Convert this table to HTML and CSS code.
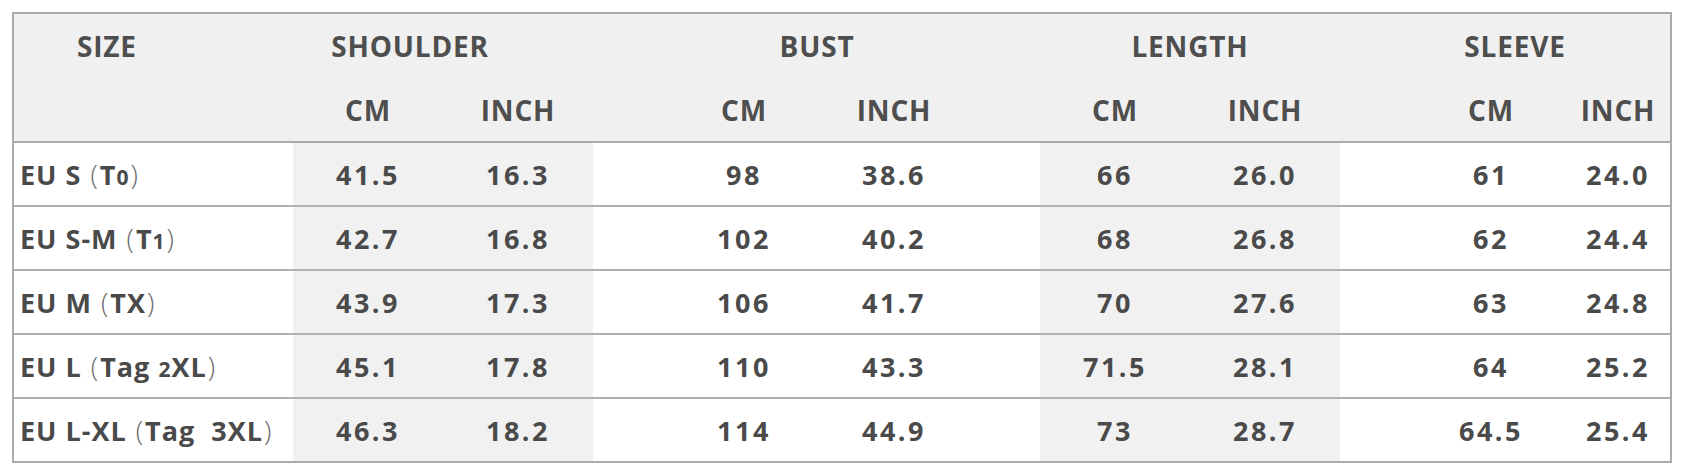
FILE: index.html
```html
<!DOCTYPE html>
<html>
<head>
<meta charset="utf-8">
<link rel="stylesheet" href="styles.css">
</head>
<body>
<div class="chart">
  <div class="head">
    <div class="row r1">
      <div class="cell size">SIZE</div>
      <div class="cell grp shoulder">SHOULDER</div>
      <div class="cell"></div>
      <div class="cell grp bust">BUST</div>
      <div class="cell"></div>
      <div class="cell grp length">LENGTH</div>
      <div class="cell"></div>
      <div class="cell grp sleeve">SLEEVE</div>
    </div>
    <div class="row r2">
      <div class="cell"></div>
      <div class="cell">CM</div><div class="cell">INCH</div>
      <div class="cell"></div>
      <div class="cell">CM</div><div class="cell">INCH</div>
      <div class="cell"></div>
      <div class="cell">CM</div><div class="cell">INCH</div>
      <div class="cell"></div>
      <div class="cell">CM</div><div class="cell">INCH</div>
    </div>
  </div>

  <div class="row data">
    <div class="cell label"><span>EU S <span class="par">(</span>T<span class="os">0</span><span class="par">)</span></span></div>
    <div class="cell sh">41.5</div><div class="cell sh">16.3</div><div class="cell"></div>
    <div class="cell">98</div><div class="cell">38.6</div><div class="cell"></div>
    <div class="cell sh">66</div><div class="cell sh">26.0</div><div class="cell"></div>
    <div class="cell">61</div><div class="cell">24.0</div>
  </div>
  <div class="row data">
    <div class="cell label"><span>EU S-M <span class="par">(</span>T<span class="os">1</span><span class="par">)</span></span></div>
    <div class="cell sh">42.7</div><div class="cell sh">16.8</div><div class="cell"></div>
    <div class="cell">102</div><div class="cell">40.2</div><div class="cell"></div>
    <div class="cell sh">68</div><div class="cell sh">26.8</div><div class="cell"></div>
    <div class="cell">62</div><div class="cell">24.4</div>
  </div>
  <div class="row data">
    <div class="cell label"><span>EU M <span class="par">(</span>TX<span class="par">)</span></span></div>
    <div class="cell sh">43.9</div><div class="cell sh">17.3</div><div class="cell"></div>
    <div class="cell">106</div><div class="cell">41.7</div><div class="cell"></div>
    <div class="cell sh">70</div><div class="cell sh">27.6</div><div class="cell"></div>
    <div class="cell">63</div><div class="cell">24.8</div>
  </div>
  <div class="row data">
    <div class="cell label"><span>EU L <span class="par">(</span>Tag <span class="os">2</span>XL<span class="par">)</span></span></div>
    <div class="cell sh">45.1</div><div class="cell sh">17.8</div><div class="cell"></div>
    <div class="cell">110</div><div class="cell">43.3</div><div class="cell"></div>
    <div class="cell sh">71.5</div><div class="cell sh">28.1</div><div class="cell"></div>
    <div class="cell">64</div><div class="cell">25.2</div>
  </div>
  <div class="row data last">
    <div class="cell label"><span>EU L-XL <span class="par">(</span>Tag&nbsp; 3XL<span class="par">)</span></span></div>
    <div class="cell sh">46.3</div><div class="cell sh">18.2</div><div class="cell"></div>
    <div class="cell">114</div><div class="cell">44.9</div><div class="cell"></div>
    <div class="cell sh">73</div><div class="cell sh">28.7</div><div class="cell"></div>
    <div class="cell">64.5</div><div class="cell">25.4</div>
  </div>
</div>
</body>
</html>
```

FILE: styles.css
```css
html, body {
  margin: 0;
  padding: 0;
  background: #ffffff;
}

body {
  font-family: "Open Sans", "Liberation Sans", sans-serif;
  color: #4b4b4b;
}

.chart {
  --cols: 279px 150px 150px 76px 150px 150px 71px 150px 150px 76px 150px 104px;
  margin: 12px 0 0 12px;
  width: 1656px;
  border: 2px solid #ababab;
}

.head {
  background: #f0f0f0;
  border-bottom: 2px solid #ababab;
}

.row {
  display: grid;
  grid-template-columns: var(--cols);
}

.cell {
  display: flex;
  align-items: center;
  justify-content: center;
  white-space: nowrap;
}

.r1 {
  height: 64px;
}

.r2 {
  height: 63px;
}

.head .cell {
  font-weight: 700;
  font-size: 28px;
  letter-spacing: 0.8px;
  color: #4e4e4e;
}

.grp {
  grid-column: span 2;
}

.size {
  justify-content: flex-start;
  padding-left: 63px;
}

.shoulder {
  padding-right: 66px;
}

.bust {
  padding-right: 4px;
}

.sleeve {
  padding-right: 56px;
}

.data {
  height: 62px;
  border-bottom: 2px solid #b0b0b0;
}

.data.last {
  border-bottom: none;
}

.data .cell {
  font-weight: 700;
  font-size: 27px;
  letter-spacing: 2.5px;
  color: #4a4a4a;
}

.data .cell.label {
  justify-content: flex-start;
  padding-left: 6px;
  letter-spacing: 1px;
  font-size: 27px;
}

.par {
  font-weight: 300;
  color: #6a6a6a;
  padding: 0 1px;
}

.os {
  font-size: 0.78em;
}

.sh {
  background: #f1f1f1;
}
```
